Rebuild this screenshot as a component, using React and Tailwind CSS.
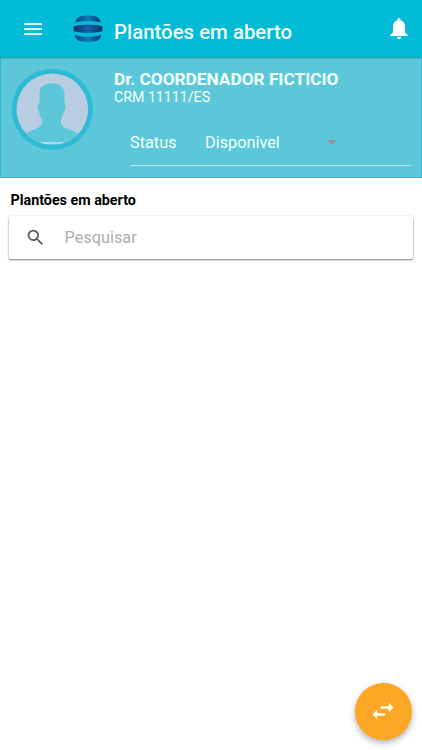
function Logo() {
  return (
    <svg className="ml-7 mt-[15px] h-7 w-[30px] shrink-0" viewBox="0 0 30 28">
      <defs>
        <linearGradient id="band">
          <stop offset="0" stopColor="#06457c" />
          <stop offset=".5" stopColor="#1479b8" />
          <stop offset="1" stopColor="#06396f" />
        </linearGradient>
        <linearGradient id="middle">
          <stop offset="0" stopColor="#043468" />
          <stop offset=".5" stopColor="#1461a6" />
          <stop offset="1" stopColor="#043468" />
        </linearGradient>
      </defs>
      <path fill="url(#band)" d="M2.3 7.4C3.3 3.5 5.5 1.500 8.500 1C12.800.4 17.200.4 21.500 1C24.500 1.500 26.700 3.500 27.700 7.400C24.500 6.600 20 6 15 6S5.500 6.600 2.300 7.400Z" />
      <path fill="url(#middle)" d="M.8 11.200C5 10.200 10 9.800 15 9.800S25 10.200 29.200 11.200C29.600 13 29.600 14.500 29.200 16.200C25 17.200 20 17.700 15 17.700S5 17.200.8 16.200C.4 14.500.4 13 .8 11.200Z" />
      <path fill="url(#band)" d="M1.700 19.700C5 21.100 10 21.700 15 21.700S25 21.100 28.300 19.700C27.500 23.700 25.500 25.700 22 26.300C17.500 27 12.500 27 8 26.300C4.500 25.700 2.500 23.700 1.700 19.700Z" />
    </svg>
  );
}

function Avatar() {
  return (
    <svg className="ml-[10px] mt-[10px] h-[82px] w-[82px] shrink-0" viewBox="0 0 82 82">
      <defs>
        <clipPath id="portrait"><circle cx="41.300" cy="41.300" r="35.800" /></clipPath>
      </defs>
      <circle cx="41.300" cy="41.300" r="40.600" fill="#2dbbd4" />
      <circle cx="41.300" cy="41.300" r="35.800" fill="#b9cde2" />
      <g clipPath="url(#portrait)">
        <path fill="#5bc7d8" d="M28.500 25C28.500 18 34 15.500 41 15.500S53.500 18.500 53.500 26V34.500C55.500 35 54.500 43 52.500 44C52 48 51 50.500 50 52V56C53 61 62 62 70 67.500V78H12V67.500C19 62 28 61 31 56V52C29.500 50 28.500 47 28 43.500C26.500 42.500 26 35.500 28.500 34.500Z" />
        <path fill="#cddcea" d="M29 74.300H53V75.700H29Z" />
      </g>
    </svg>
  );
}

export default function App() {
  return (
    <div className="flex h-[750px] w-full flex-col overflow-hidden bg-white font-['Roboto',sans-serif]">
      <header className="z-10 flex h-[57px] shrink-0 bg-[#02bcd7] text-white shadow-[0_1px_2px_rgba(0,80,100,0.4)]">
        <svg className="ml-[21px] mt-[17px] h-6 w-6 shrink-0" viewBox="0 0 24 24" fill="#d9fbff">
          <path d="M3 18h18v-2H3v2zm0-5h18v-2H3v2zm0-7v2h18V6H3z" />
        </svg>
        <Logo />
        <h1 className="ml-[11px] mt-[18px] whitespace-nowrap text-[20.4px] font-medium leading-7 text-[#ecfdff]">Plantões em aberto</h1>
        <svg className="ml-auto mr-[13px] mt-[17px] h-[23px] w-5 shrink-0" viewBox="0 0 20 23" fill="white">
          <path d="M8.500 3.300V2.500A1.500 1.500 0 0 1 11.500 2.500V3.300C14.500 4 16 6.600 16 9.500V15.500L18.700 18V19H1.300V18L4 15.500V9.500C4 6.600 5.500 4 8.500 3.300ZM7.800 20H12.200A2.200 2 0 0 1 7.800 20Z" />
        </svg>
      </header>

      <section className="flex h-[121px] shrink-0 border border-[#2fb9cf] bg-[#5bc7d8] text-[#f2feff]">
        <Avatar />
        <div className="ml-[21px] flex flex-1 flex-col">
          <h2 className="mt-[11px] whitespace-nowrap text-[17.250px] font-bold leading-5">Dr. COORDENADOR FICTICIO</h2>
          <p className="text-[14.2px] leading-[17px]">CRM 11111/ES</p>
          <div className="ml-4 mr-[10px] mt-[14px] flex h-[46px] items-center border-b border-[#b5e6ee] text-[16.3px] leading-6">
            <span className="w-[75px] pt-px">Status</span>
            <span className="w-[122px] pt-px">Disponivel</span>
            <span className="h-0 w-0 border-x-[5px] border-t-[5px] border-x-transparent border-t-[#8f999b]" />
          </div>
        </div>
      </section>

      <main className="flex flex-1 flex-col">
        <h3 className="ml-[10.5px] mt-3 text-[14.3px] font-bold leading-5 text-black">Plantões em aberto</h3>
        <div className="ml-[8.5px] mr-[8.8px] mt-[6px] flex h-[43px] items-center rounded-[2px] bg-white shadow-[0_1px_2px_rgba(0,0,0,0.5),0_0_3px_rgba(0,0,0,0.07)]">
          <svg className="ml-4 h-[21px] w-[21px]" viewBox="0 0 24 24" fill="#5b5b5b">
            <path d="M15.500 14h-.79l-.28-.27A6.471 6.471 0 0 0 16 9.500 6.500 6.500 0 1 0 9.500 16c1.610 0 3.090-.59 4.230-1.570l.27.28v.79l5 4.990L20.490 19l-4.990-5zm-6 0C7.010 14 5 11.990 5 9.500S7.010 5 9.500 5 14 7.010 14 9.500 11.990 14 9.500 14z" />
          </svg>
          <input aria-label="Pesquisar" placeholder="Pesquisar" className="ml-[19px] h-6 min-w-0 flex-1 bg-transparent pt-px text-[16.3px] outline-none placeholder:text-[#adadad]" />
        </div>
        <button aria-label="Trocar" className="mb-[10.5px] ml-auto mr-[10.5px] mt-auto flex h-[57px] w-[57px] items-center justify-center rounded-full bg-[#fca626] shadow-[0_3px_6px_rgba(0,0,0,0.3)]">
          <svg className="h-7 w-7" viewBox="0 0 24 24" fill="#fffaf0">
            <path d="M6.990 11L3 15l3.990 4v-3H14v-2H6.990v-3zM21 9l-3.990-4v3H10v2h7.010v3L21 9z" />
          </svg>
        </button>
      </main>
    </div>
  );
}
